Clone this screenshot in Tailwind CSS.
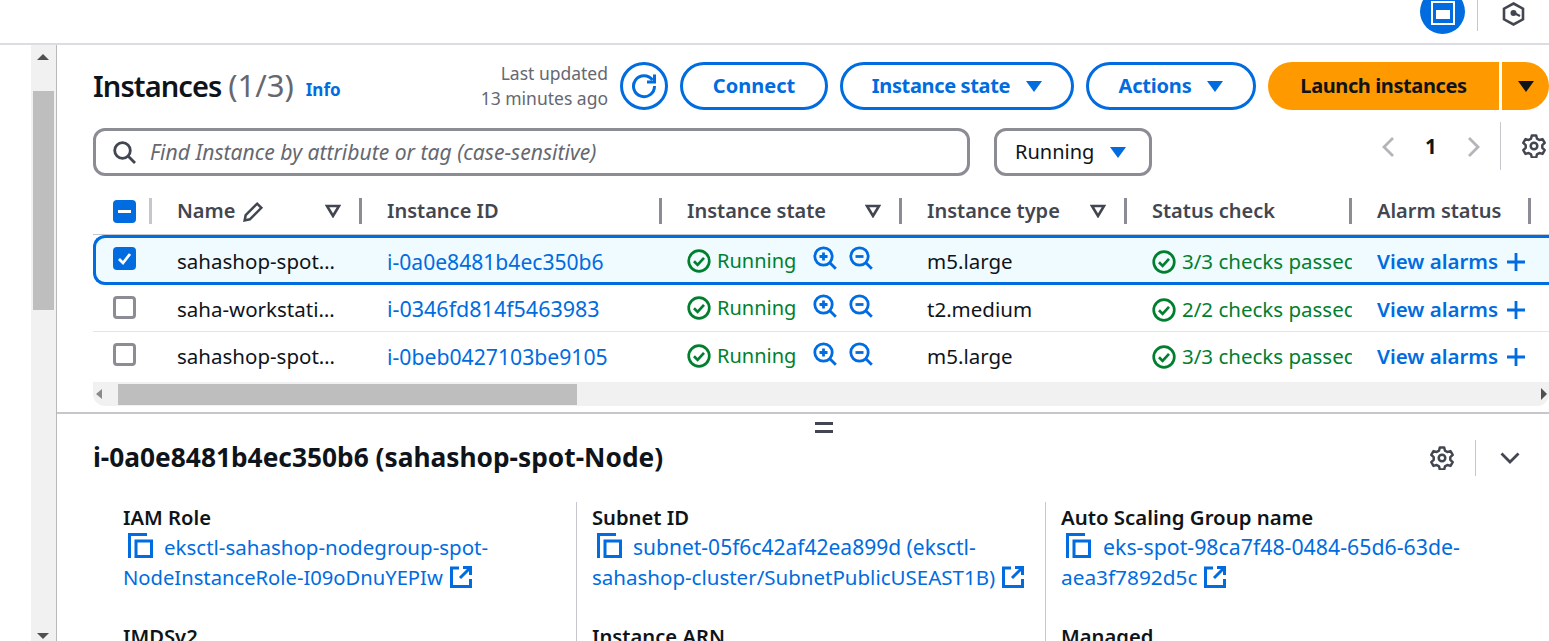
<!DOCTYPE html>
<html lang="en">
<head>
    <meta charset="UTF-8">
    <title>Instances</title>
    <script src="https://cdn.jsdelivr.net/npm/@tailwindcss/browser@4"></script>
</head>
<body class="w-[1549px] h-[641px] overflow-hidden bg-white font-['Noto_Sans',sans-serif] text-[#0f141a] text-[20.500px]">
<svg class="hidden">
    <symbol id="ok" viewBox="0 0 24 24"><circle cx="12" cy="12" r="10.3" fill="none" stroke="currentColor" stroke-width="2.7"/><path d="M7 12.3l3.6 3.6 6.4-7" fill="none" stroke="currentColor" stroke-width="2.7"/></symbol>
    <symbol id="zoomin" viewBox="0 0 24 24"><circle cx="10.5" cy="10.5" r="8.7" fill="none" stroke="currentColor" stroke-width="2.8"/><path d="M16.8 16.8l6 6" stroke="currentColor" stroke-width="2.8"/><path d="M6.5 10.5h8M10.5 6.5v8" stroke="currentColor" stroke-width="2.8"/></symbol>
    <symbol id="zoomout" viewBox="0 0 24 24"><circle cx="10.5" cy="10.5" r="8.7" fill="none" stroke="currentColor" stroke-width="2.8"/><path d="M16.8 16.8l6 6" stroke="currentColor" stroke-width="2.8"/><path d="M6.5 10.5h8" stroke="currentColor" stroke-width="2.8"/></symbol>
    <symbol id="copy" viewBox="0 0 25 25"><path d="M1.5 25V1.5H19" fill="none" stroke="currentColor" stroke-width="3"/><path d="M8 8h15.500v15.500H8z" fill="none" stroke="currentColor" stroke-width="3"/></symbol>
    <symbol id="ext" viewBox="0 0 22 22"><path d="M9 2H1.500v18.500H20.500V13" fill="none" stroke="currentColor" stroke-width="3"/><path d="M13 1.500h7.500V9M20 2l-10 10" fill="none" stroke="currentColor" stroke-width="3"/></symbol>
    <symbol id="gear" viewBox="0 0 24 24"><path d="M9.800 1.500h4.400l.8 3.200 2.300 1.300 3.200-.9 2.200 3.800-2.400 2.300v2.600l2.400 2.300-2.200 3.800-3.200-.9-2.300 1.300-.8 3.200H9.800l-.8-3.200-2.300-1.300-3.200.9-2.200-3.800 2.400-2.300v-2.600L1.300 8.900l2.200-3.800 3.200.9L9 4.700z" fill="none" stroke="currentColor" stroke-width="2.500" stroke-linejoin="round"/><circle cx="12" cy="12" r="3.300" fill="none" stroke="currentColor" stroke-width="2.500"/></symbol>
    <symbol id="sortd" viewBox="0 0 16 14"><path d="M2 2h12l-6 10z" fill="none" stroke="currentColor" stroke-width="2.600"/></symbol>
</svg>

<!-- top bar -->
<div class="h-[43px] relative overflow-hidden">
    <div class="absolute left-[1420px] top-[-11px] w-[45px] h-[45px] rounded-full bg-[#006ce0] flex items-center justify-center">
        <div class="w-[24px] h-[24px] mt-[2px] border-[2px] border-white flex flex-col items-center justify-center"><div class="w-[14px] h-[9px] mt-[3px] bg-white"></div></div>
    </div>
    <div class="absolute left-[1477px] top-0 w-px h-[31px] bg-[#c6c6cd]"></div>
    <svg class="absolute left-[1502px] top-[2px] w-[23px] h-[24px] text-[#424650]" viewBox="0 0 23 24"><path d="M11.500 1.500l9.500 5.200v10.600l-9.500 5.200L2 17.300V6.700z" fill="none" stroke="currentColor" stroke-width="2.600"/><circle cx="11.500" cy="11" r="3" fill="currentColor"/><path d="M12 11l6 3" stroke="currentColor" stroke-width="2.200"/></svg>
</div>
<div class="h-[2px] bg-[#dcdce2]"></div>

<div class="flex h-[596px]">
    <div class="w-[31px] shrink-0"></div>
    <!-- page scrollbar -->
    <div class="w-[26px] shrink-0 bg-[#f1f1f1] border-r border-[#b9b9b9] relative">
        <div class="absolute left-[6px] top-[9px] w-0 h-0 border-x-[6px] border-x-transparent border-b-[6px] border-b-[#505050]"></div>
        <div class="absolute left-[2px] top-[46px] w-[21px] h-[219px] bg-[#bebebe]"></div>
        <div class="absolute left-[6px] bottom-[2px] w-0 h-0 border-x-[6px] border-x-transparent border-t-[6px] border-t-[#505050]"></div>
    </div>

    <div class="flex-1 min-w-0 overflow-hidden">
        <div class="pl-[36px] pt-[17px]">
            <!-- header -->
            <div class="flex items-center h-[48px]">
                <h1 class="-mt-[2px] text-[29px] font-semibold tracking-[-0.9px] text-[#0f141a] whitespace-nowrap">Instances <span class="font-normal text-[31px] tracking-normal text-[#656871]">(1/3)</span></h1>
                <a class="ml-[12px] mt-[7px] text-[17px] font-bold text-[#006ce0]">Info</a>
                <div class="ml-auto mr-[12px] text-right text-[#656871] text-[17.500px] leading-[25px] whitespace-nowrap">Last updated<br>13 minutes ago</div>
                <button class="w-[48px] h-[48px] shrink-0 rounded-full border-[3px] border-[#006ce0] flex items-center justify-center text-[#006ce0]">
                    <svg class="w-[26px] h-[26px]" viewBox="0 0 26 26"><path d="M21.500 7A10.500 10.500 0 1 0 23.500 13" fill="none" stroke="currentColor" stroke-width="3"/><path d="M23.500 1.500V9h-7.500" fill="none" stroke="currentColor" stroke-width="3"/></svg>
                </button>
                <button class="ml-[12px] w-[148px] h-[48px] shrink-0 rounded-full border-[3px] border-[#006ce0] text-[#006ce0] font-bold text-[20px]">Connect</button>
                <button class="ml-[12px] w-[234px] h-[48px] shrink-0 rounded-full border-[3px] border-[#006ce0] text-[#006ce0] font-bold text-[20px] tracking-[-0.35px] flex items-center justify-center gap-[16px]">Instance state<span class="w-0 h-0 border-x-[8px] border-x-transparent border-t-[11px] border-t-[#006ce0]"></span></button>
                <button class="ml-[12px] w-[170px] h-[48px] shrink-0 rounded-full border-[3px] border-[#006ce0] text-[#006ce0] font-bold text-[20px] tracking-[-0.2px] flex items-center justify-center gap-[16px]">Actions<span class="w-0 h-0 border-x-[8px] border-x-transparent border-t-[11px] border-t-[#006ce0]"></span></button>
                <button class="ml-[12px] w-[231px] h-[48px] shrink-0 rounded-l-full bg-[#ff9900] font-bold text-[20px] tracking-[-0.4px] text-[#0f141a]">Launch instances</button>
                <button class="ml-[3px] w-[47px] h-[48px] shrink-0 rounded-r-full bg-[#ff9900] flex items-center justify-center"><span class="w-0 h-0 border-x-[8px] border-x-transparent border-t-[11px] border-t-[#0f141a]"></span></button>
            </div>

            <!-- search row -->
            <div class="flex mt-[18px] h-[48px]">
                <div class="w-[877px] h-[48px] shrink-0 border-[3px] border-[#8c8c94] rounded-[12px] flex items-center pl-[17px]">
                    <svg class="w-[23px] h-[23px] text-[#424650]" viewBox="0 0 23 23"><circle cx="9.500" cy="9.500" r="7.800" fill="none" stroke="currentColor" stroke-width="2.800"/><path d="M15 15l7 7" stroke="currentColor" stroke-width="2.800"/></svg>
                    <span class="ml-[14px] italic text-[21.100px] text-[#656871] whitespace-nowrap">Find Instance by attribute or tag (case-sensitive)</span>
                </div>
                <div class="ml-[24px] w-[158px] h-[48px] shrink-0 border-[3px] border-[#8c8c94] rounded-[12px] flex items-center pl-[18px] gap-[16px] text-[20px]">Running<span class="w-0 h-0 border-x-[8px] border-x-transparent border-t-[11px] border-t-[#006ce0]"></span></div>
                <div class="relative flex-1">
                    <svg class="absolute left-[229px] top-[8px] w-[14px] h-[22px] text-[#b4b4bb]" viewBox="0 0 14 22"><path d="M12 2L3 11l9 9" fill="none" stroke="currentColor" stroke-width="2.800"/></svg>
                    <span class="absolute left-[273px] top-[3px] font-bold">1</span>
                    <svg class="absolute left-[315px] top-[8px] w-[14px] h-[22px] text-[#b4b4bb]" viewBox="0 0 14 22"><path d="M2 2l9 9-9 9" fill="none" stroke="currentColor" stroke-width="2.800"/></svg>
                    <div class="absolute left-[348px] top-[-6px] w-px h-[48px] bg-[#c6c6cd]"></div>
                    <svg class="absolute left-[370px] top-[6px] w-[24px] h-[24px] text-[#424650]"><use href="#gear"/></svg>
                </div>
            </div>

            <!-- table header -->
            <div class="grid grid-cols-[59px_210px_300px_240px_225px_225px_200px] mt-[16px] h-[42px] items-start font-semibold text-[20px] text-[#424650] whitespace-nowrap">
                <div class="h-[38px] flex items-center justify-between pl-[20px] pr-0">
                    <span class="w-[23px] h-[23px] rounded-[4px] bg-[#006ce0] flex items-center justify-center"><span class="w-[13px] h-[3px] bg-white"></span></span>
                    <span class="w-[3px] h-[26px] bg-[#c6c6cd]"></span>
                </div>
                <div class="h-[38px] flex items-center pl-[25px]">Name<svg class="ml-[7px] w-[23px] h-[23px]" viewBox="0 0 22 22"><path d="M2.500 19.500l1-5L14.500 3.500l4 4L7.500 18.500z" fill="none" stroke="currentColor" stroke-width="2.400"/></svg><svg class="ml-auto mr-[18px] w-[16px] h-[14px]"><use href="#sortd"/></svg><span class="w-[3px] h-[26px] bg-[#8c8c94] shrink-0"></span></div>
                <div class="h-[38px] flex items-center pl-[25px]"><span>Instance ID</span><span class="ml-auto w-[3px] h-[26px] bg-[#8c8c94]"></span></div>
                <div class="h-[38px] flex items-center pl-[25px]">Instance state<svg class="ml-auto mr-[18px] w-[16px] h-[14px]"><use href="#sortd"/></svg><span class="w-[3px] h-[26px] bg-[#8c8c94] shrink-0"></span></div>
                <div class="h-[38px] flex items-center pl-[25px]">Instance type<svg class="ml-auto mr-[18px] w-[16px] h-[14px]"><use href="#sortd"/></svg><span class="w-[3px] h-[26px] bg-[#8c8c94] shrink-0"></span></div>
                <div class="h-[38px] flex items-center pl-[25px]">Status check<span class="ml-auto w-[3px] h-[26px] bg-[#8c8c94]"></span></div>
                <div class="h-[38px] flex items-center pl-[25px]">Alarm status<span class="ml-[27px] w-[3px] h-[26px] bg-[#8c8c94]"></span></div>
            </div>

            <!-- rows -->
            <div class="border-t border-[#c6c6cd]">
                <div class="grid grid-cols-[56px_210px_300px_240px_225px_225px_200px] h-[50px] items-center whitespace-nowrap bg-[#f0fbff] border-y-[3px] border-l-[3px] border-[#006ce0] rounded-l-[12px]">
                    <div class="pl-[17px] pb-[4px]"><span class="w-[23px] h-[23px] rounded-[4px] bg-[#006ce0] flex items-center justify-center"><svg class="w-[15px] h-[15px]" viewBox="0 0 15 15"><path d="M2 8l4 4 7-9" fill="none" stroke="white" stroke-width="2.800"/></svg></span></div>
                    <div class="pl-[25px] pt-[3px]">sahashop-spot…</div>
                    <a class="pl-[25px] pt-[3px] text-[21.100px] text-[#006ce0]">i-0a0e8481b4ec350b6</a>
                    <div class="pl-[25px] pt-[2px] flex items-center text-[20px] text-[#00802f]"><svg class="w-[24px] h-[24px] shrink-0"><use href="#ok"/></svg><span class="ml-[6px]">Running</span><svg class="ml-[17px] -mt-[6px] w-[24px] h-[24px] text-[#006ce0]"><use href="#zoomin"/></svg><svg class="ml-[12px] -mt-[6px] w-[24px] h-[24px] text-[#006ce0]"><use href="#zoomout"/></svg></div>
                    <div class="pl-[25px] pt-[3px]">m5.large</div>
                    <div class="pl-[25px] pt-[3px] flex items-center text-[20.500px] text-[#00802f] overflow-hidden pr-[24px]"><svg class="w-[24px] h-[24px] shrink-0"><use href="#ok"/></svg><span class="ml-[6px]">3/3 checks passed</span></div>
                    <div class="pl-[25px] pt-[3px] flex items-center font-semibold text-[#006ce0]">View alarms<svg class="ml-[9px] w-[18px] h-[18px]" viewBox="0 0 18 18"><path d="M9 0v18M0 9h18" stroke="currentColor" stroke-width="2.800"/></svg></div>
                </div>
                <div class="grid grid-cols-[59px_210px_300px_240px_225px_225px_200px] h-[47px] items-center whitespace-nowrap border-b border-[#e4e4e8]">
                    <div class="pl-[20px] pb-[2px]"><span class="block w-[23px] h-[23px] rounded-[4px] border-[3px] border-[#8c8c94]"></span></div>
                    <div class="pl-[25px] pt-[3px]">saha-workstati…</div>
                    <a class="pl-[25px] pt-[3px] text-[21.500px] text-[#006ce0]">i-0346fd814f5463983</a>
                    <div class="pl-[25px] flex items-center text-[20px] text-[#00802f]"><svg class="w-[24px] h-[24px] shrink-0"><use href="#ok"/></svg><span class="ml-[6px]">Running</span><svg class="ml-[17px] -mt-[4px] w-[24px] h-[24px] text-[#006ce0]"><use href="#zoomin"/></svg><svg class="ml-[12px] -mt-[4px] w-[24px] h-[24px] text-[#006ce0]"><use href="#zoomout"/></svg></div>
                    <div class="pl-[25px] pt-[3px]">t2.medium</div>
                    <div class="pl-[25px] pt-[3px] flex items-center text-[20.500px] text-[#00802f] overflow-hidden pr-[24px]"><svg class="w-[24px] h-[24px] shrink-0"><use href="#ok"/></svg><span class="ml-[6px]">2/2 checks passed</span></div>
                    <div class="pl-[25px] pt-[3px] flex items-center font-semibold text-[#006ce0]">View alarms<svg class="ml-[9px] w-[18px] h-[18px]" viewBox="0 0 18 18"><path d="M9 0v18M0 9h18" stroke="currentColor" stroke-width="2.800"/></svg></div>
                </div>
                <div class="grid grid-cols-[59px_210px_300px_240px_225px_225px_200px] h-[50px] items-center whitespace-nowrap">
                    <div class="pl-[20px] pb-[6px]"><span class="block w-[23px] h-[23px] rounded-[4px] border-[3px] border-[#8c8c94]"></span></div>
                    <div class="pl-[25px] pb-[1px]">sahashop-spot…</div>
                    <a class="pl-[25px] pb-[1px] text-[21.200px] text-[#006ce0]">i-0beb0427103be9105</a>
                    <div class="pl-[25px] pb-[2px] flex items-center text-[20px] text-[#00802f]"><svg class="w-[24px] h-[24px] shrink-0"><use href="#ok"/></svg><span class="ml-[6px]">Running</span><svg class="ml-[17px] -mt-[4px] w-[24px] h-[24px] text-[#006ce0]"><use href="#zoomin"/></svg><svg class="ml-[12px] -mt-[4px] w-[24px] h-[24px] text-[#006ce0]"><use href="#zoomout"/></svg></div>
                    <div class="pl-[25px] pb-[1px]">m5.large</div>
                    <div class="pl-[25px] pb-[1px] flex items-center text-[20.500px] text-[#00802f] overflow-hidden pr-[24px]"><svg class="w-[24px] h-[24px] shrink-0"><use href="#ok"/></svg><span class="ml-[6px]">3/3 checks passed</span></div>
                    <div class="pl-[25px] pb-[1px] flex items-center font-semibold text-[#006ce0]">View alarms<svg class="ml-[9px] w-[18px] h-[18px]" viewBox="0 0 18 18"><path d="M9 0v18M0 9h18" stroke="currentColor" stroke-width="2.800"/></svg></div>
                </div>
            </div>

            <!-- table horizontal scrollbar -->
            <div class="h-[24px] bg-[#f1f1f1] rounded-b-[12px] relative w-[1456px]">
                <div class="absolute left-[3px] top-[7px] w-0 h-0 border-y-[5px] border-y-transparent border-r-[6px] border-r-[#8a8a8a]"></div>
                <div class="absolute left-[25px] top-[2px] w-[459px] h-[21px] bg-[#bebebe]"></div>
                <div class="absolute right-[2px] top-[6px] w-0 h-0 border-y-[6px] border-y-transparent border-l-[6px] border-l-[#505050]"></div>
            </div>
        </div>

        <!-- split panel -->
        <div class="mt-[6px] border-t-2 border-[#c6c6cd] relative pl-[36px]">
            <div class="absolute left-[758px] top-[8px] w-[18px] h-[11px] border-y-[3px] border-[#424650]"></div>
            <div class="flex items-center h-[36px] mt-[26px] pr-[29px]">
                <h2 class="text-[26.300px] font-bold whitespace-nowrap">i-0a0e8481b4ec350b6 (sahashop-spot-Node)</h2>
                <svg class="ml-auto w-[24px] h-[24px] text-[#424650]"><use href="#gear"/></svg>
                <span class="ml-[21px] w-px h-[36px] bg-[#c6c6cd]"></span>
                <svg class="ml-[24px] w-[20px] h-[12px] text-[#424650]" viewBox="0 0 20 12"><path d="M1.500 1.500l8.500 8.500 8.500-8.500" fill="none" stroke="currentColor" stroke-width="2.800"/></svg>
            </div>
            <div class="grid grid-cols-[453px_469px_1fr] ml-[30px] mt-[26px] leading-[30px]">
                <div class="pr-[60px]">
                    <div class="font-semibold text-[20.200px] h-[30px]">IAM Role</div>
                    <a class="block text-[#006ce0] whitespace-nowrap"><svg class="inline-block ml-[5px] mr-[11px] w-[25px] h-[25px] align-[-3px]"><use href="#copy"/></svg>eksctl-sahashop-nodegroup-spot-<br><span class="text-[20.200px]">NodeInstanceRole-I09oDnuYEPIw</span><svg class="inline-block ml-[7px] w-[22px] h-[22px] align-[-3px]"><use href="#ext"/></svg></a>
                    <div class="font-semibold text-[20.200px] mt-[29px]">IMDSv2</div>
                </div>
                <div class="border-l border-[#c6c6cd] pl-[15px]">
                    <div class="font-semibold text-[20.200px] h-[30px]">Subnet ID</div>
                    <a class="block text-[#006ce0] whitespace-nowrap"><svg class="inline-block ml-[5px] mr-[11px] w-[25px] h-[25px] align-[-3px]"><use href="#copy"/></svg><span class="text-[21px]">subnet-05f6c42af42ea899d (eksctl-</span><br>sahashop-cluster/SubnetPublicUSEAST1B)<svg class="inline-block ml-[7px] w-[22px] h-[22px] align-[-3px]"><use href="#ext"/></svg></a>
                    <div class="font-semibold text-[20.200px] mt-[29px]">Instance ARN</div>
                </div>
                <div class="border-l border-[#c6c6cd] pl-[15px]">
                    <div class="font-semibold text-[20.400px] h-[30px]">Auto Scaling Group name</div>
                    <a class="block text-[#006ce0] whitespace-nowrap"><svg class="inline-block ml-[5px] mr-[12px] w-[25px] h-[25px] align-[-3px]"><use href="#copy"/></svg><span class="text-[21.300px]">eks-spot-98ca7f48-0484-65d6-63de-</span><br><span class="text-[20.800px]">aea3f7892d5c</span><svg class="inline-block ml-[7px] w-[22px] h-[22px] align-[-3px]"><use href="#ext"/></svg></a>
                    <div class="font-semibold text-[20.200px] mt-[29px]">Managed</div>
                </div>
            </div>
        </div>
    </div>
</div>
</body>
</html>
